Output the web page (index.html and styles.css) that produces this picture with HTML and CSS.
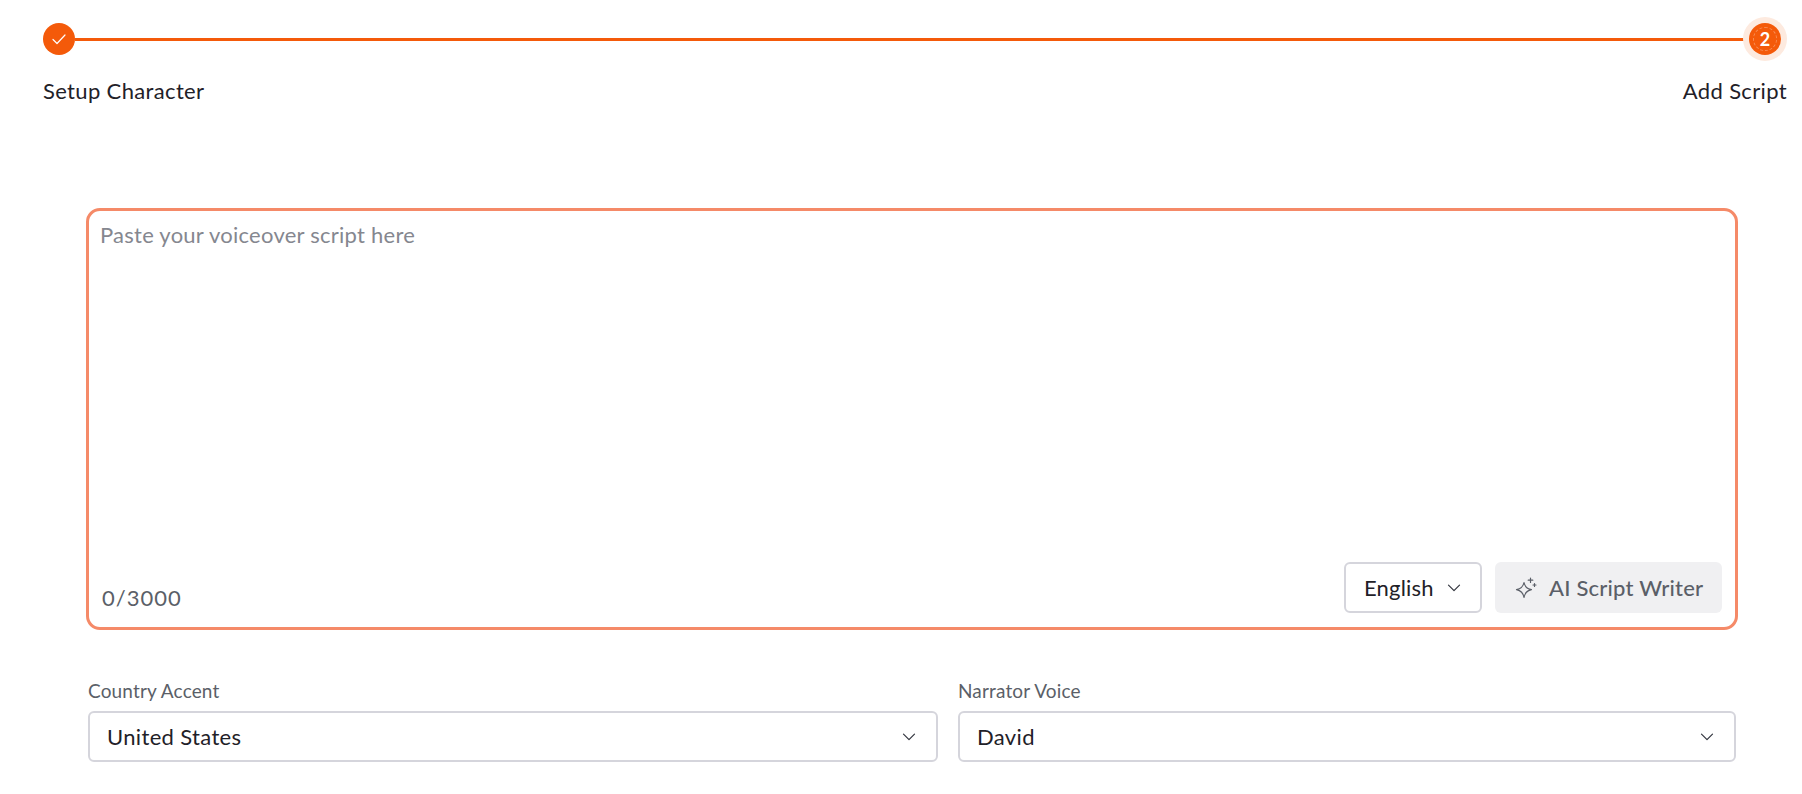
FILE: index.html
```html
<!DOCTYPE html>
<html lang="en">
<head>
    <meta charset="UTF-8">
    <meta name="viewport" content="width=device-width, initial-scale=1.0">
    <title>Add Script</title>
    <link rel="stylesheet" href="styles.css">
</head>
<body>
    <!-- Stepper -->
    <div class="stepper">
        <div class="step-track">
            <div class="step-circle">
                <svg width="16" height="16" viewBox="0 0 16 16" fill="none" stroke="#fff" stroke-width="1.2" stroke-linecap="round" stroke-linejoin="round"><path d="M2 8.500l4 4 8-8.500"/></svg>
            </div>
            <div class="step-line"></div>
            <div class="step-circle current"><span class="step-ring">2</span></div>
        </div>
        <div class="step-labels">
            <span>Setup Character</span>
            <span>Add Script</span>
        </div>
    </div>

    <div class="content">
        <!-- Script box -->
        <div class="script-box">
            <div class="placeholder">Paste your voiceover script here</div>
            <div class="script-footer">
                <span class="counter">0/3000</span>
                <div class="script-actions">
                    <button class="lang-btn">English
                        <svg class="chevron" width="14" height="8" viewBox="0 0 14 8" fill="none" stroke="#33363f" stroke-width="1.200" stroke-linecap="round" stroke-linejoin="round"><path d="M1.500 1.200l5.500 5.500 5.500-5.500"/></svg>
                    </button>
                    <button class="ai-btn">
                        <svg width="24" height="24" viewBox="0 0 24 24" fill="none" stroke="#5b5f68" stroke-width="1.200" stroke-linejoin="round" stroke-linecap="round"><path d="M10 6.500c.8 4.200 2.800 6.200 7.500 7.200-4.700 1-6.700 3-7.500 7.800-.8-4.800-2.800-6.800-7.500-7.800 4.700-1 6.700-3 7.500-7.200z"/><path d="M16.500 2v4.500M14.200 4.200h4.600M20.500 7.500v3M19 9h3"/></svg>
                        AI Script Writer
                    </button>
                </div>
            </div>
        </div>

        <!-- Selects -->
        <div class="fields">
            <div class="field">
                <label>Country Accent</label>
                <div class="select">United States
                    <svg class="chevron" width="14" height="8" viewBox="0 0 14 8" fill="none" stroke="#33363f" stroke-width="1.200" stroke-linecap="round" stroke-linejoin="round"><path d="M1.500 1.200l5.500 5.500 5.500-5.500"/></svg>
                </div>
            </div>
            <div class="field">
                <label>Narrator Voice</label>
                <div class="select">David
                    <svg class="chevron" width="14" height="8" viewBox="0 0 14 8" fill="none" stroke="#33363f" stroke-width="1.200" stroke-linecap="round" stroke-linejoin="round"><path d="M1.500 1.200l5.500 5.500 5.500-5.500"/></svg>
                </div>
            </div>
        </div>
    </div>
</body>
</html>
```

FILE: styles.css
```css
* {
    box-sizing: border-box;
}
html, body {
    height: 100%;
}
body {
    margin: 0;
    font-family: Lato, "Noto Sans", sans-serif;
    font-size: 22px;
    letter-spacing: 0.35px;
    color: #1f2128;
    background-color: #fff;
    overflow: hidden;
}
.stepper {
    padding: 23px 15px 0 43px;
}
.step-track {
    display: flex;
    align-items: center;
    padding-right: 6px;
}
.step-circle {
    width: 32px;
    height: 32px;
    border-radius: 50%;
    background-color: #f45a0a;
    display: flex;
    align-items: center;
    justify-content: center;
    flex: none;
}
.step-circle.current {
    box-shadow: 0 0 0 6px #fdeadf;
    color: #fff;
    font-weight: 700;
    font-size: 18px;
    letter-spacing: 0;
}
.step-ring {
    width: 24px;
    height: 24px;
    border-radius: 50%;
    border: 1px dashed rgba(255, 255, 255, 0.3);
    display: flex;
    align-items: center;
    justify-content: center;
}
.step-line {
    flex: 1;
    height: 3px;
    background-color: #f45a0a;
}
.step-labels {
    display: flex;
    justify-content: space-between;
    margin-top: 22px;
    line-height: 28px;
}
.content {
    padding: 0 64px 0 86px;
    margin-top: 103px;
}
.script-box {
    height: 422px;
    border: 3px solid #f58a68;
    border-radius: 14px;
    padding: 10px 13px 14px 11px;
    display: flex;
    flex-direction: column;
    justify-content: space-between;
}
.placeholder {
    line-height: 28px;
    letter-spacing: 0.25px;
    color: #85878f;
}
.script-footer {
    display: flex;
    justify-content: space-between;
    align-items: flex-end;
}
.counter {
    line-height: 28px;
    color: #5b5f68;
    letter-spacing: 1px;
    padding-left: 2px;
    padding-bottom: 1px;
}
.script-actions {
    display: flex;
    gap: 13px;
}
.script-actions button {
    height: 51px;
    font-family: inherit;
    font-size: 22px;
    letter-spacing: 0.2px;
    border-radius: 6px;
    display: flex;
    align-items: center;
}
.lang-btn {
    width: 138px;
    padding: 0 19px 0 18px;
    background-color: #fff;
    border: 2px solid #d5d5dc;
    color: #1f2128;
    justify-content: space-between;
}
.ai-btn {
    width: 227px;
    padding: 0 18px 0 19px;
    gap: 11px;
    background-color: #f0f0f2;
    border: none;
    color: #5b5f68;
    font-weight: 500;
}
.fields {
    display: grid;
    grid-template-columns: 850px 1fr;
    gap: 20px;
    margin: 49px 2px 0;
}
.field label {
    display: block;
    font-size: 19px;
    letter-spacing: 0.15px;
    line-height: 24px;
    color: #5b5f68;
    margin-bottom: 8px;
}
.select {
    height: 51px;
    border: 2px solid #d5d5dc;
    border-radius: 6px;
    padding: 0 20px 0 17px;
    display: flex;
    align-items: center;
    justify-content: space-between;
}
```
